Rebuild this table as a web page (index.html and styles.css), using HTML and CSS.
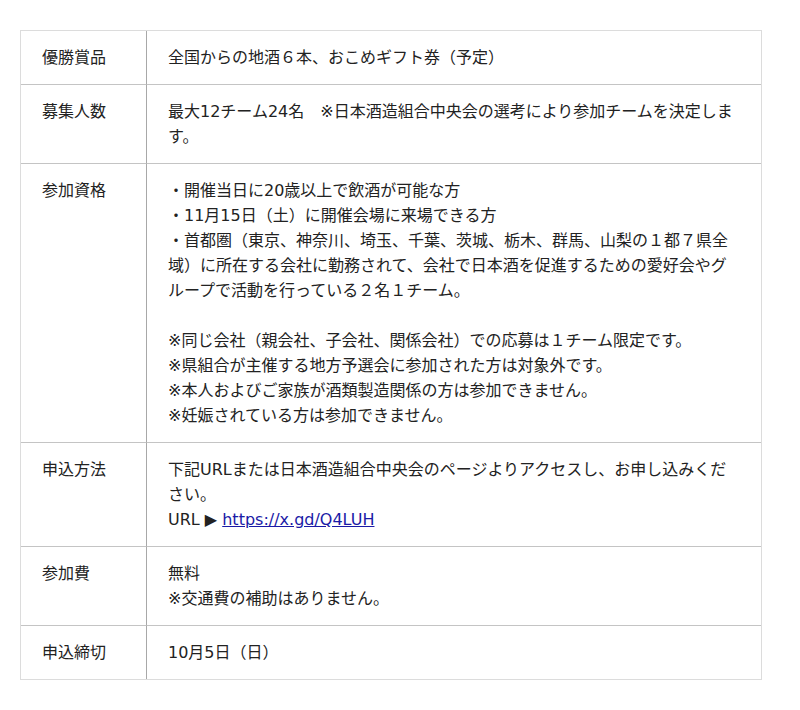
FILE: index.html
```html
<!DOCTYPE html>
<html lang="ja">
<head>
<meta charset="utf-8">
<link rel="stylesheet" href="styles.css">
</head>
<body>
<div class="info">
  <div class="label">優勝賞品</div>
  <div class="value">全国からの地酒６本、おこめギフト券（予定）</div>

  <div class="label">募集人数</div>
  <div class="value">最大12チーム24名　※日本酒造組合中央会の選考により参加チームを決定します。</div>

  <div class="label">参加資格</div>
  <div class="value">・開催当日に20歳以上で飲酒が可能な方<br>・11月15日（土）に開催会場に来場できる方<br>・首都圏（東京、神奈川、埼玉、千葉、茨城、栃木、群馬、山梨の１都７県全域）に所在する会社に勤務されて、会社で日本酒を促進するための愛好会やグループで活動を行っている２名１チーム。<br><br>※同じ会社（親会社、子会社、関係会社）での応募は１チーム限定です。<br>※県組合が主催する地方予選会に参加された方は対象外です。<br>※本人およびご家族が酒類製造関係の方は参加できません。<br>※妊娠されている方は参加できません。</div>

  <div class="label">申込方法</div>
  <div class="value">下記URLまたは日本酒造組合中央会のページよりアクセスし、お申し込みください。<br>URL ▶ <a class="link" href="#">https://x.gd/Q4LUH</a></div>

  <div class="label">参加費</div>
  <div class="value">無料<br>※交通費の補助はありません。</div>

  <div class="label last">申込締切</div>
  <div class="value last">10月5日（日）</div>
</div>
</body>
</html>
```
FILE: styles.css
```css
html, body {
  margin: 0;
  padding: 0;
  background: #fff;
}
body {
  font-family: "DejaVu Sans", "Noto Sans CJK JP", sans-serif;
  font-size: 16px;
  line-height: 25px;
  color: #222;
}
.info {
  margin: 30px 0 0 20px;
  width: 740px;
  border: 1px solid #dcdcdc;
  display: grid;
  grid-template-columns: 126px 1fr;
}
.label,
.value {
  padding: 14px 20px 14px 21px;
  border-bottom: 1px solid #c4c4c4;
}
.label {
  border-right: 1px solid #a8a8a8;
}
.value {
  padding-left: 21px;
  padding-right: 19px;
}
.last {
  border-bottom: none;
}
.link {
  color: #1a1aa6;
  text-decoration: underline;
}
```
